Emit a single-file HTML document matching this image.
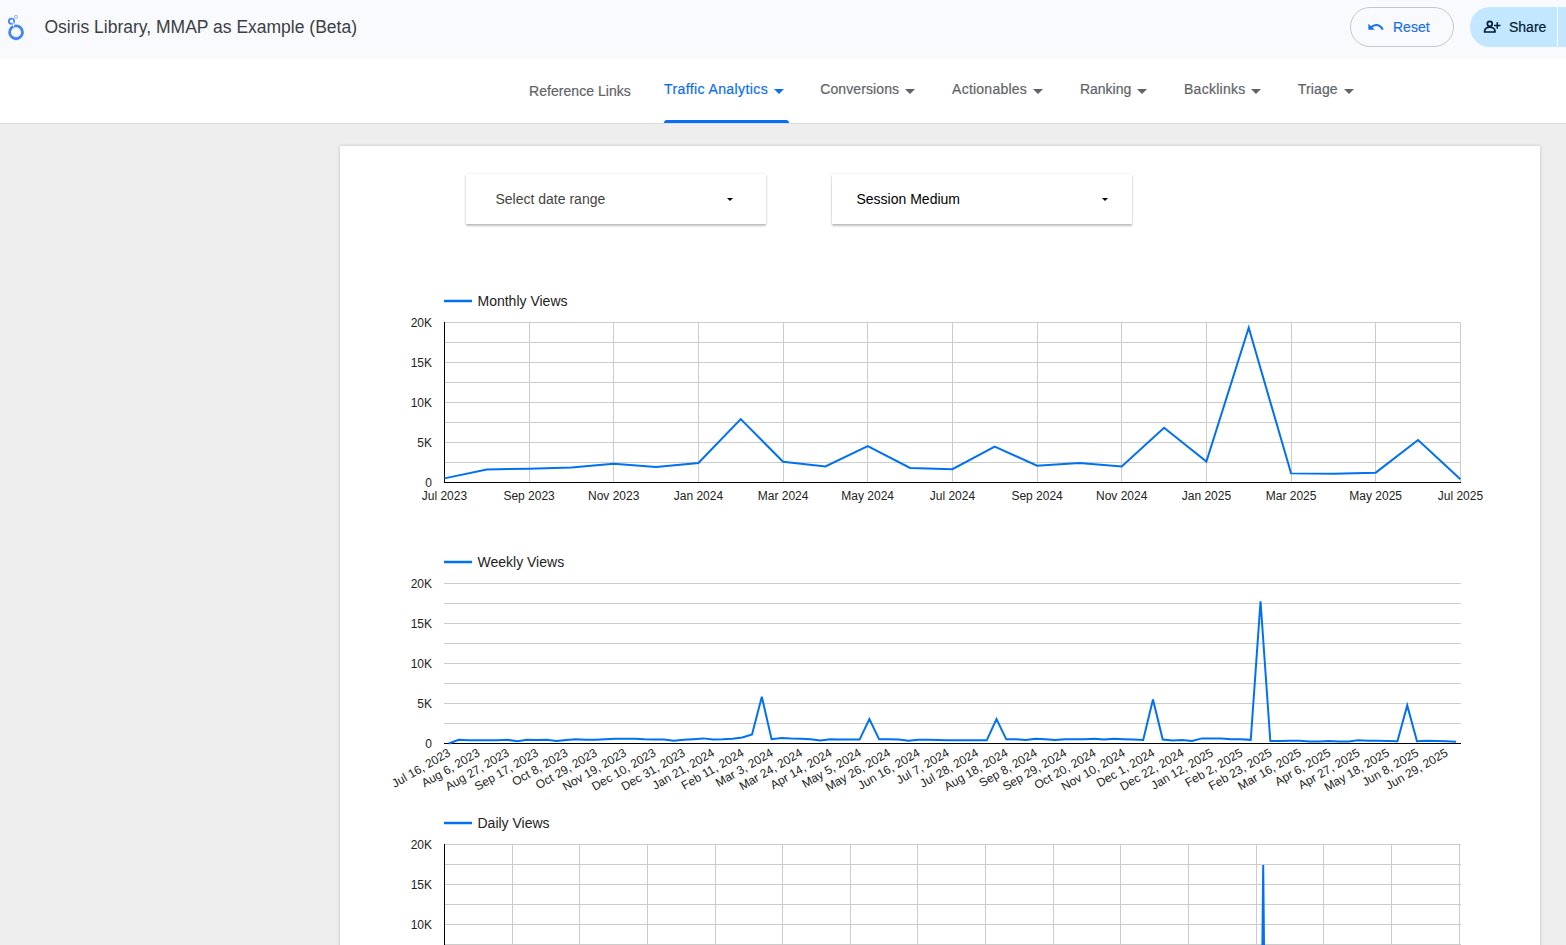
<!DOCTYPE html>
<html><head><meta charset="utf-8">
<style>
html,body{margin:0;padding:0;}
body{width:1566px;height:945px;overflow:hidden;background:#eeeeee;position:relative;font-family:"Liberation Sans", sans-serif;}
.hdr{position:absolute;left:0;top:0;width:1566px;height:59px;background:#f8fafd;}
.title{position:absolute;left:44.5px;top:17px;font-size:17.5px;line-height:20px;color:#3c4043;white-space:nowrap;}
.btn-reset{position:absolute;left:1350px;top:7px;width:102px;height:38px;border:1px solid #c7c7c7;border-radius:20px;}
.btn-share{position:absolute;left:1470px;top:7px;width:87px;height:40px;background:#c2e7ff;border-radius:20px 0 0 20px;}
.btn-share2{position:absolute;left:1558px;top:7px;width:20px;height:40px;background:#c2e7ff;}
.nav-bar{position:absolute;left:0;top:59px;width:1566px;height:64px;background:#fff;border-bottom:1px solid #dadce0;}
.nav{position:absolute;font-size:14px;line-height:16px;white-space:nowrap;-webkit-text-stroke:0.2px currentColor;}
.arr{position:absolute;width:0;height:0;border-left:5px solid transparent;border-right:5px solid transparent;border-top:5px solid #5f6368;}
.uline{position:absolute;left:664px;top:120px;width:125px;height:3px;background:#0a6ef0;border-radius:3px 3px 0 0;}
.card{position:absolute;left:340px;top:146px;width:1200px;height:900px;background:#fff;box-shadow:0 0 3px rgba(0,0,0,0.22);}
.ctl{position:absolute;top:174px;width:300px;height:50px;background:#fff;box-shadow:0 2px 2px rgba(0,0,0,0.24), 0 0 2px rgba(0,0,0,0.12);}
.ctl span{position:absolute;left:29.5px;top:17px;font-size:14px;line-height:16px;white-space:nowrap;}
.ctl i{position:absolute;left:261px;top:24px;width:0;height:0;border-left:3.5px solid transparent;border-right:3.5px solid transparent;border-top:3.5px solid #000;}
svg.ch{position:absolute;left:0;top:0;}
.tk{font-family:"Liberation Sans", sans-serif;font-size:12px;fill:#222;}
.lg{font-family:"Liberation Sans", sans-serif;font-size:14px;fill:#222;}
</style></head><body>
<div class="hdr">
<div style="position:absolute;left:0;top:0;width:40px;height:58px"><svg width="30" height="46" viewBox="0 0 30 46" style="position:absolute;left:0;top:0">
<circle cx="16.05" cy="32.3" r="6.45" fill="none" stroke="#4285f4" stroke-width="2.8"/>
<circle cx="11.5" cy="21.2" r="2.6" fill="none" stroke="#4285f4" stroke-width="1.8"/>
<circle cx="16" cy="16.8" r="1.55" fill="none" stroke="#8ab4f8" stroke-width="1"/>
<line x1="12.3" y1="19.6" x2="13.8" y2="26.8" stroke="#f8fafd" stroke-width="1.1"/>
</svg></div>
<div class="title">Osiris Library, MMAP as Example (Beta)</div>
<div class="btn-reset"></div>
<svg width="24" height="16" viewBox="0 0 24 16" style="position:absolute;left:1364px;top:18px">
<path d="M7.2 9.3 C9.8 6.3 15.6 5.3 18.8 11.6" fill="none" stroke="#1a6fe6" stroke-width="2"/>
<path d="M4.4 5.8 L4.4 11.7 L10.8 11.7 Z" fill="#1a6fe6"/>
</svg>
<div style="position:absolute;left:1393px;top:19px;font-size:14px;line-height:16px;color:#1a6fe6;-webkit-text-stroke:0.2px #1a6fe6">Reset</div>
<div class="btn-share"></div>
<div class="btn-share2"></div>
<svg width="30" height="30" viewBox="0 0 30 30" style="position:absolute;left:1476px;top:12px">
<circle cx="13.8" cy="11.8" r="2.45" fill="none" stroke="#001d35" stroke-width="1.7"/>
<path d="M8.65 20 L18.95 20 L18.95 18.7 C18.95 16.7 16.5 15.05 13.8 15.05 C11.1 15.05 8.65 16.7 8.65 18.7 Z" fill="none" stroke="#001d35" stroke-width="1.7"/>
<path d="M21.3 10.3 V16.7 M18.1 13.5 H24.5" stroke="#001d35" stroke-width="1.5"/>
</svg>
<div style="position:absolute;left:1509px;top:19px;font-size:14px;line-height:16px;color:#001d35;-webkit-text-stroke:0.2px #001d35">Share</div>
</div>
<div class="nav-bar"></div>
<div class="nav" style="left:529.0px;top:83px;color:#5f6368;letter-spacing:0.05px">Reference Links</div><div class="nav" style="left:664.0px;top:81px;color:#0a6ef0;letter-spacing:0.4px">Traffic Analytics</div><div class="arr" style="left:774.3px;top:89px;border-top-color:#0a6ef0"></div><div class="nav" style="left:820.3000000000001px;top:81px;color:#5f6368;letter-spacing:0.09px">Conversions</div><div class="arr" style="left:905px;top:89px;border-top-color:#5f6368"></div><div class="nav" style="left:952.1px;top:81px;color:#5f6368;letter-spacing:0.23px">Actionables</div><div class="arr" style="left:1033px;top:89px;border-top-color:#5f6368"></div><div class="nav" style="left:1079.9px;top:81px;color:#5f6368;letter-spacing:0.0px">Ranking</div><div class="arr" style="left:1137.2px;top:89px;border-top-color:#5f6368"></div><div class="nav" style="left:1184.0px;top:81px;color:#5f6368;letter-spacing:0.26px">Backlinks</div><div class="arr" style="left:1251.3px;top:89px;border-top-color:#5f6368"></div><div class="nav" style="left:1297.8px;top:81px;color:#5f6368;letter-spacing:0.14px">Triage</div><div class="arr" style="left:1344px;top:89px;border-top-color:#5f6368"></div>
<div class="uline"></div>
<div class="card"></div>
<div class="ctl" style="left:466px"><span style="color:#444">Select date range</span><i></i></div>
<div class="ctl" style="left:832px"><span style="left:24.5px;color:#000">Session Medium</span><i style="left:269.5px"></i></div>
<svg class="ch" width="1566" height="945" viewBox="0 0 1566 945">
<line x1="444" y1="462.5" x2="1461" y2="462.5" stroke="#cccccc" stroke-width="1"/>
<line x1="444" y1="442.5" x2="1461" y2="442.5" stroke="#cccccc" stroke-width="1"/>
<line x1="444" y1="422.5" x2="1461" y2="422.5" stroke="#cccccc" stroke-width="1"/>
<line x1="444" y1="402.5" x2="1461" y2="402.5" stroke="#cccccc" stroke-width="1"/>
<line x1="444" y1="382.5" x2="1461" y2="382.5" stroke="#cccccc" stroke-width="1"/>
<line x1="444" y1="362.5" x2="1461" y2="362.5" stroke="#cccccc" stroke-width="1"/>
<line x1="444" y1="342.5" x2="1461" y2="342.5" stroke="#cccccc" stroke-width="1"/>
<line x1="444" y1="322.5" x2="1461" y2="322.5" stroke="#cccccc" stroke-width="1"/>
<line x1="529.5" y1="322" x2="529.5" y2="482" stroke="#cccccc" stroke-width="1"/>
<line x1="613.5" y1="322" x2="613.5" y2="482" stroke="#cccccc" stroke-width="1"/>
<line x1="698.5" y1="322" x2="698.5" y2="482" stroke="#cccccc" stroke-width="1"/>
<line x1="783.5" y1="322" x2="783.5" y2="482" stroke="#cccccc" stroke-width="1"/>
<line x1="867.5" y1="322" x2="867.5" y2="482" stroke="#cccccc" stroke-width="1"/>
<line x1="952.5" y1="322" x2="952.5" y2="482" stroke="#cccccc" stroke-width="1"/>
<line x1="1037.5" y1="322" x2="1037.5" y2="482" stroke="#cccccc" stroke-width="1"/>
<line x1="1121.5" y1="322" x2="1121.5" y2="482" stroke="#cccccc" stroke-width="1"/>
<line x1="1206.5" y1="322" x2="1206.5" y2="482" stroke="#cccccc" stroke-width="1"/>
<line x1="1291.5" y1="322" x2="1291.5" y2="482" stroke="#cccccc" stroke-width="1"/>
<line x1="1375.5" y1="322" x2="1375.5" y2="482" stroke="#cccccc" stroke-width="1"/>
<line x1="1460.5" y1="322" x2="1460.5" y2="482" stroke="#cccccc" stroke-width="1"/>
<line x1="444.5" y1="322" x2="444.5" y2="483" stroke="#000" stroke-width="1"/>
<line x1="444" y1="482.5" x2="1461" y2="482.5" stroke="#000" stroke-width="1"/>
<polyline points="444.40,478.38 486.73,469.58 529.07,468.66 571.40,467.58 613.73,463.86 656.07,466.90 698.40,462.98 740.73,419.06 783.07,461.78 825.40,466.38 867.73,446.18 910.07,467.98 952.40,469.18 994.73,446.58 1037.07,465.70 1079.40,462.98 1121.73,466.38 1164.07,427.78 1206.40,461.58 1248.73,327.78 1291.07,473.38 1333.40,473.78 1375.73,472.66 1418.07,439.98 1460.40,479.18" fill="none" stroke="#0072f0" stroke-width="2" stroke-linejoin="miter"/>
<text x="432" y="486.5" text-anchor="end" class="tk">0</text>
<text x="432" y="446.5" text-anchor="end" class="tk">5K</text>
<text x="432" y="406.5" text-anchor="end" class="tk">10K</text>
<text x="432" y="366.5" text-anchor="end" class="tk">15K</text>
<text x="432" y="326.5" text-anchor="end" class="tk">20K</text>
<text x="444.4" y="500" text-anchor="middle" class="tk">Jul 2023</text>
<text x="529.1" y="500" text-anchor="middle" class="tk">Sep 2023</text>
<text x="613.7" y="500" text-anchor="middle" class="tk">Nov 2023</text>
<text x="698.4" y="500" text-anchor="middle" class="tk">Jan 2024</text>
<text x="783.1" y="500" text-anchor="middle" class="tk">Mar 2024</text>
<text x="867.7" y="500" text-anchor="middle" class="tk">May 2024</text>
<text x="952.4" y="500" text-anchor="middle" class="tk">Jul 2024</text>
<text x="1037.1" y="500" text-anchor="middle" class="tk">Sep 2024</text>
<text x="1121.7" y="500" text-anchor="middle" class="tk">Nov 2024</text>
<text x="1206.4" y="500" text-anchor="middle" class="tk">Jan 2025</text>
<text x="1291.1" y="500" text-anchor="middle" class="tk">Mar 2025</text>
<text x="1375.7" y="500" text-anchor="middle" class="tk">May 2025</text>
<text x="1460.4" y="500" text-anchor="middle" class="tk">Jul 2025</text>
<line x1="444" y1="301" x2="472" y2="301" stroke="#0072f0" stroke-width="2.5"/>
<text x="477.5" y="306" class="lg">Monthly Views</text>
<line x1="444" y1="723.5" x2="1461" y2="723.5" stroke="#cccccc" stroke-width="1"/>
<line x1="444" y1="703.5" x2="1461" y2="703.5" stroke="#cccccc" stroke-width="1"/>
<line x1="444" y1="683.5" x2="1461" y2="683.5" stroke="#cccccc" stroke-width="1"/>
<line x1="444" y1="663.5" x2="1461" y2="663.5" stroke="#cccccc" stroke-width="1"/>
<line x1="444" y1="643.5" x2="1461" y2="643.5" stroke="#cccccc" stroke-width="1"/>
<line x1="444" y1="623.5" x2="1461" y2="623.5" stroke="#cccccc" stroke-width="1"/>
<line x1="444" y1="603.5" x2="1461" y2="603.5" stroke="#cccccc" stroke-width="1"/>
<line x1="444" y1="583.5" x2="1461" y2="583.5" stroke="#cccccc" stroke-width="1"/>
<line x1="444" y1="743.5" x2="1461" y2="743.5" stroke="#000" stroke-width="1"/>
<polyline points="448.89,743.50 458.67,739.82 468.45,740.30 478.23,740.30 488.00,740.30 497.78,740.14 507.56,739.82 517.34,741.18 527.12,739.82 536.90,739.98 546.68,739.82 556.46,741.10 566.24,740.06 576.01,739.30 585.79,739.82 595.57,739.82 605.35,739.34 615.13,738.86 624.91,738.86 634.69,738.86 644.47,739.34 654.25,739.58 664.02,739.58 673.80,740.78 683.58,739.82 693.36,739.18 703.14,738.38 712.92,739.58 722.70,739.34 732.48,738.86 742.25,737.42 752.03,734.54 761.81,696.70 771.59,739.14 781.37,737.90 791.15,738.62 800.93,738.86 810.71,739.34 820.49,740.54 830.26,739.14 840.04,739.58 849.82,739.58 859.60,739.58 869.38,719.10 879.16,739.34 888.94,739.34 898.72,739.58 908.50,740.78 918.27,739.82 928.05,739.82 937.83,740.06 947.61,740.30 957.39,740.30 967.17,740.30 976.95,740.30 986.73,740.30 996.50,719.10 1006.28,739.34 1016.06,739.14 1025.84,739.98 1035.62,738.86 1045.40,739.14 1055.18,739.98 1064.96,739.14 1074.74,739.14 1084.51,739.14 1094.29,738.86 1104.07,739.58 1113.85,738.86 1123.63,739.14 1133.41,739.58 1143.19,739.98 1152.97,699.50 1162.75,739.58 1172.52,740.58 1182.30,739.98 1192.08,740.98 1201.86,738.38 1211.64,738.38 1221.42,738.38 1231.20,739.14 1240.98,739.14 1250.75,739.82 1260.53,601.30 1270.31,741.10 1280.09,740.98 1289.87,740.78 1299.65,740.78 1309.43,741.54 1319.21,741.54 1328.99,740.98 1338.76,741.54 1348.54,741.54 1358.32,740.30 1368.10,740.78 1377.88,740.78 1387.66,740.98 1397.44,741.26 1407.22,705.42 1417.00,741.26 1426.77,740.78 1436.55,740.98 1446.33,741.26 1456.11,741.74" fill="none" stroke="#0072f0" stroke-width="2" stroke-linejoin="miter"/>
<text x="432" y="747.7" text-anchor="end" class="tk">0</text>
<text x="432" y="707.7" text-anchor="end" class="tk">5K</text>
<text x="432" y="667.7" text-anchor="end" class="tk">10K</text>
<text x="432" y="627.7" text-anchor="end" class="tk">15K</text>
<text x="432" y="587.7" text-anchor="end" class="tk">20K</text>
<text x="451.4" y="755.2" text-anchor="end" transform="rotate(-30 451.4 755.2)" class="tk">Jul 16, 2023</text>
<text x="480.7" y="755.2" text-anchor="end" transform="rotate(-30 480.7 755.2)" class="tk">Aug 6, 2023</text>
<text x="510.1" y="755.2" text-anchor="end" transform="rotate(-30 510.1 755.2)" class="tk">Aug 27, 2023</text>
<text x="539.4" y="755.2" text-anchor="end" transform="rotate(-30 539.4 755.2)" class="tk">Sep 17, 2023</text>
<text x="568.7" y="755.2" text-anchor="end" transform="rotate(-30 568.7 755.2)" class="tk">Oct 8, 2023</text>
<text x="598.1" y="755.2" text-anchor="end" transform="rotate(-30 598.1 755.2)" class="tk">Oct 29, 2023</text>
<text x="627.4" y="755.2" text-anchor="end" transform="rotate(-30 627.4 755.2)" class="tk">Nov 19, 2023</text>
<text x="656.7" y="755.2" text-anchor="end" transform="rotate(-30 656.7 755.2)" class="tk">Dec 10, 2023</text>
<text x="686.1" y="755.2" text-anchor="end" transform="rotate(-30 686.1 755.2)" class="tk">Dec 31, 2023</text>
<text x="715.4" y="755.2" text-anchor="end" transform="rotate(-30 715.4 755.2)" class="tk">Jan 21, 2024</text>
<text x="744.8" y="755.2" text-anchor="end" transform="rotate(-30 744.8 755.2)" class="tk">Feb 11, 2024</text>
<text x="774.1" y="755.2" text-anchor="end" transform="rotate(-30 774.1 755.2)" class="tk">Mar 3, 2024</text>
<text x="803.4" y="755.2" text-anchor="end" transform="rotate(-30 803.4 755.2)" class="tk">Mar 24, 2024</text>
<text x="832.8" y="755.2" text-anchor="end" transform="rotate(-30 832.8 755.2)" class="tk">Apr 14, 2024</text>
<text x="862.1" y="755.2" text-anchor="end" transform="rotate(-30 862.1 755.2)" class="tk">May 5, 2024</text>
<text x="891.4" y="755.2" text-anchor="end" transform="rotate(-30 891.4 755.2)" class="tk">May 26, 2024</text>
<text x="920.8" y="755.2" text-anchor="end" transform="rotate(-30 920.8 755.2)" class="tk">Jun 16, 2024</text>
<text x="950.1" y="755.2" text-anchor="end" transform="rotate(-30 950.1 755.2)" class="tk">Jul 7, 2024</text>
<text x="979.4" y="755.2" text-anchor="end" transform="rotate(-30 979.4 755.2)" class="tk">Jul 28, 2024</text>
<text x="1008.8" y="755.2" text-anchor="end" transform="rotate(-30 1008.8 755.2)" class="tk">Aug 18, 2024</text>
<text x="1038.1" y="755.2" text-anchor="end" transform="rotate(-30 1038.1 755.2)" class="tk">Sep 8, 2024</text>
<text x="1067.5" y="755.2" text-anchor="end" transform="rotate(-30 1067.5 755.2)" class="tk">Sep 29, 2024</text>
<text x="1096.8" y="755.2" text-anchor="end" transform="rotate(-30 1096.8 755.2)" class="tk">Oct 20, 2024</text>
<text x="1126.1" y="755.2" text-anchor="end" transform="rotate(-30 1126.1 755.2)" class="tk">Nov 10, 2024</text>
<text x="1155.5" y="755.2" text-anchor="end" transform="rotate(-30 1155.5 755.2)" class="tk">Dec 1, 2024</text>
<text x="1184.8" y="755.2" text-anchor="end" transform="rotate(-30 1184.8 755.2)" class="tk">Dec 22, 2024</text>
<text x="1214.1" y="755.2" text-anchor="end" transform="rotate(-30 1214.1 755.2)" class="tk">Jan 12, 2025</text>
<text x="1243.5" y="755.2" text-anchor="end" transform="rotate(-30 1243.5 755.2)" class="tk">Feb 2, 2025</text>
<text x="1272.8" y="755.2" text-anchor="end" transform="rotate(-30 1272.8 755.2)" class="tk">Feb 23, 2025</text>
<text x="1302.1" y="755.2" text-anchor="end" transform="rotate(-30 1302.1 755.2)" class="tk">Mar 16, 2025</text>
<text x="1331.5" y="755.2" text-anchor="end" transform="rotate(-30 1331.5 755.2)" class="tk">Apr 6, 2025</text>
<text x="1360.8" y="755.2" text-anchor="end" transform="rotate(-30 1360.8 755.2)" class="tk">Apr 27, 2025</text>
<text x="1390.2" y="755.2" text-anchor="end" transform="rotate(-30 1390.2 755.2)" class="tk">May 18, 2025</text>
<text x="1419.5" y="755.2" text-anchor="end" transform="rotate(-30 1419.5 755.2)" class="tk">Jun 8, 2025</text>
<text x="1448.8" y="755.2" text-anchor="end" transform="rotate(-30 1448.8 755.2)" class="tk">Jun 29, 2025</text>
<line x1="444" y1="562" x2="472" y2="562" stroke="#0072f0" stroke-width="2.5"/>
<text x="477.5" y="567" class="lg">Weekly Views</text>
<line x1="444" y1="844.5" x2="1461" y2="844.5" stroke="#cccccc" stroke-width="1"/>
<line x1="444" y1="864.5" x2="1461" y2="864.5" stroke="#cccccc" stroke-width="1"/>
<line x1="444" y1="884.5" x2="1461" y2="884.5" stroke="#cccccc" stroke-width="1"/>
<line x1="444" y1="904.5" x2="1461" y2="904.5" stroke="#cccccc" stroke-width="1"/>
<line x1="444" y1="924.5" x2="1461" y2="924.5" stroke="#cccccc" stroke-width="1"/>
<line x1="444" y1="944.5" x2="1461" y2="944.5" stroke="#cccccc" stroke-width="1"/>
<line x1="444" y1="964.5" x2="1461" y2="964.5" stroke="#cccccc" stroke-width="1"/>
<line x1="444" y1="984.5" x2="1461" y2="984.5" stroke="#cccccc" stroke-width="1"/>
<line x1="512.5" y1="844" x2="512.5" y2="1005" stroke="#cccccc" stroke-width="1"/>
<line x1="579.5" y1="844" x2="579.5" y2="1005" stroke="#cccccc" stroke-width="1"/>
<line x1="647.5" y1="844" x2="647.5" y2="1005" stroke="#cccccc" stroke-width="1"/>
<line x1="715.5" y1="844" x2="715.5" y2="1005" stroke="#cccccc" stroke-width="1"/>
<line x1="782.5" y1="844" x2="782.5" y2="1005" stroke="#cccccc" stroke-width="1"/>
<line x1="850.5" y1="844" x2="850.5" y2="1005" stroke="#cccccc" stroke-width="1"/>
<line x1="917.5" y1="844" x2="917.5" y2="1005" stroke="#cccccc" stroke-width="1"/>
<line x1="985.5" y1="844" x2="985.5" y2="1005" stroke="#cccccc" stroke-width="1"/>
<line x1="1053.5" y1="844" x2="1053.5" y2="1005" stroke="#cccccc" stroke-width="1"/>
<line x1="1120.5" y1="844" x2="1120.5" y2="1005" stroke="#cccccc" stroke-width="1"/>
<line x1="1188.5" y1="844" x2="1188.5" y2="1005" stroke="#cccccc" stroke-width="1"/>
<line x1="1256.5" y1="844" x2="1256.5" y2="1005" stroke="#cccccc" stroke-width="1"/>
<line x1="1323.5" y1="844" x2="1323.5" y2="1005" stroke="#cccccc" stroke-width="1"/>
<line x1="1391.5" y1="844" x2="1391.5" y2="1005" stroke="#cccccc" stroke-width="1"/>
<line x1="1459.5" y1="844" x2="1459.5" y2="1005" stroke="#cccccc" stroke-width="1"/>
<line x1="444.5" y1="844" x2="444.5" y2="1005" stroke="#000" stroke-width="1"/>
<polyline points="1261.8,1004 1263.2,865 1264.6,1004" fill="none" stroke="#0072f0" stroke-width="2"/>
<text x="432" y="848.7" text-anchor="end" class="tk">20K</text>
<text x="432" y="888.7" text-anchor="end" class="tk">15K</text>
<text x="432" y="928.7" text-anchor="end" class="tk">10K</text>
<line x1="444" y1="823" x2="472" y2="823" stroke="#0072f0" stroke-width="2.5"/>
<text x="477.5" y="828" class="lg">Daily Views</text>
</svg>
</body></html>
